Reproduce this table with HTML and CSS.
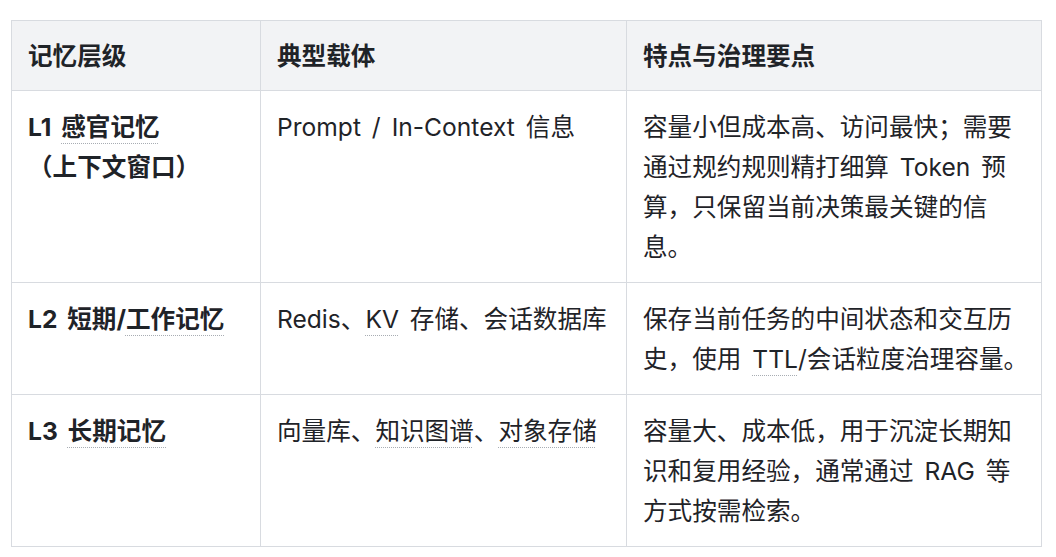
FILE: index.html
```html
<!DOCTYPE html>
<html lang="zh-CN">
<head>
<meta charset="utf-8">
<link rel="stylesheet" href="styles.css">
</head>
<body>
<div class="wrap">
<table class="mem">
  <colgroup>
    <col class="c1"><col class="c2"><col class="c3">
  </colgroup>
  <thead>
    <tr><th>记忆层级</th><th>典型载体</th><th>特点与治理要点</th></tr>
  </thead>
  <tbody>
    <tr>
      <td><strong>L1 <span class="dot">感官记忆</span><br>（上下文窗口）</strong></td>
      <td>Prompt / In-Context 信息</td>
      <td>容量小但成本高、访问最快；需要通过规约规则精打细算 Token 预算，只保留当前决策最关键的信息。</td>
    </tr>
    <tr>
      <td><strong>L2 短期/<span class="dot">工作记忆</span></strong></td>
      <td>Redis、<span class="dot">KV</span> 存储、会话数据库</td>
      <td>保存当前任务的中间状态和交互历史，使用 <span class="dot">TTL</span>/会话粒度治理容量。</td>
    </tr>
    <tr>
      <td><strong>L3 <span class="dot">长期记忆</span></strong></td>
      <td>向量库、<span class="dot">知识图谱</span>、<span class="dot">对象存储</span></td>
      <td>容量大、成本低，用于沉淀长期知识和复用经验，通常通过 RAG 等方式按需检索。</td>
    </tr>
  </tbody>
</table>
</div>
</body>
</html>
```

FILE: styles.css
```css
html, body {
  margin: 0;
  padding: 0;
  background: #ffffff;
}
.wrap {
  padding: 20px 15px 0 11px;
}
.mem {
  border-collapse: collapse;
  width: 1030px;
  table-layout: fixed;
  font-family: Inter, "Noto Sans CJK SC", sans-serif;
  font-size: 24.6px;
  line-height: 40px;
  color: #1f2328;
  word-spacing: 4px;
}
.c1 { width: 249px; }
.c2 { width: 366px; }
.c3 { width: 415px; }
.mem th, .mem td {
  border: 1px solid #d8dbe0;
  padding: 16px 12px 15px 16px;
  text-align: left;
  vertical-align: top;
}
.mem th {
  background: #f2f3f5;
  font-weight: 700;
  padding-top: 15px;
  padding-bottom: 14px;
}
.mem strong {
  font-weight: 700;
}
.dot {
  text-decoration: underline dotted #a8adb3;
  text-decoration-thickness: 1px;
  text-underline-offset: 7px;
}
```
